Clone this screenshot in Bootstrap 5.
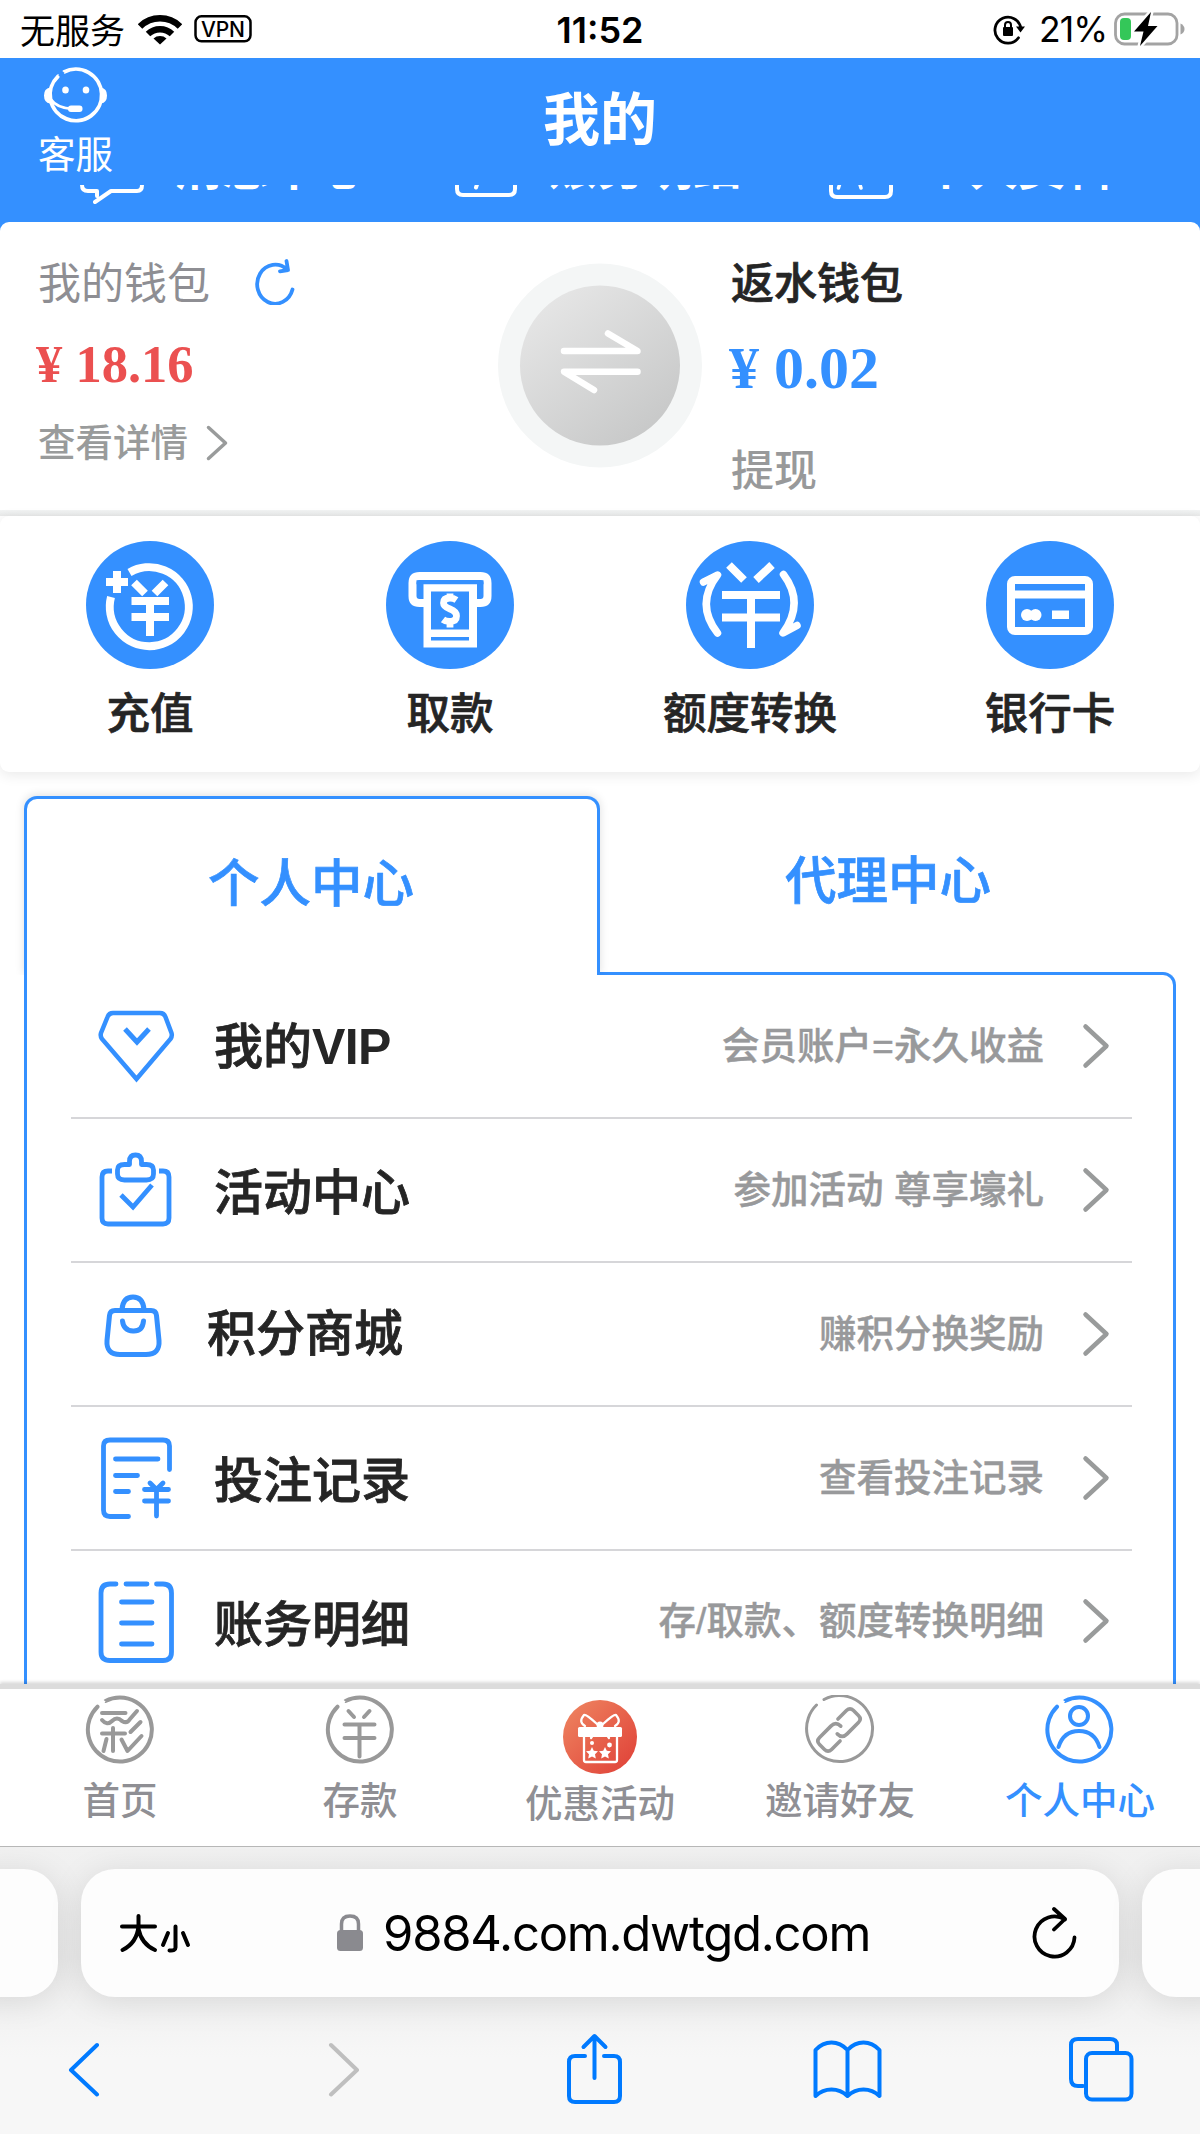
<!DOCTYPE html>
<html lang="zh-CN">
<head>
<meta charset="utf-8">
<meta name="viewport" content="width=device-width, initial-scale=1">
<title>我的</title>
<link href="https://cdn.jsdelivr.net/npm/bootstrap@5.3.0/dist/css/bootstrap.min.css" rel="stylesheet">
<style>
:root{--brand:#3490ff;--ink:#252525;--soft:#98999b;--tabgray:#8f8f94;--ios:#007aff}
body{font-family:"Noto Sans CJK SC",sans-serif;background:#fff;color:var(--ink);width:1200px;height:2134px;overflow:hidden}
svg{display:block;flex:none;fill:none;stroke-linecap:round;stroke-linejoin:round}
.status-bar{height:58px;padding:0 15px 0 20px;color:#000;font-size:35px;line-height:56px}
.sysfont{font-family:Inter,sans-serif}
.clock{font-size:36px;padding-right:5px;padding-top:2px}
.percent{margin:0 6px 0 14px;font-size:35.5px;letter-spacing:-1px;padding-top:2px}
.side{width:400px}
.app-head{height:127px;background:var(--brand);color:#fff}
.service{width:151px;padding-top:9px}
.service span{font-size:37.5px;line-height:40px;margin-top:8px}
.head-title{font-size:57px;line-height:114px}
.peek{height:37px;background:var(--brand);color:#fff;overflow:hidden;font-size:48px;line-height:48px;font-weight:700}
.peek span{margin-bottom:34px;white-space:nowrap}
.peek-a{margin-left:80px;width:375px;gap:29px}
.peek-b{width:374px;gap:31px}
.peek-c{gap:28px}
.under-blue{background:linear-gradient(var(--brand) 0 40px,#f0f2f2 40px)}
.wallet{height:288px;background:#fff;border-radius:9px 9px 0 0}
.wallet-left{width:497px;padding:35px 0 0 38px}
.wallet-right{padding:35px 0 0 29px}
.w-name{font-size:43px;line-height:46px;font-weight:500}
.semi{-webkit-text-stroke:.7px currentColor}
.w-sum{font-family:"Liberation Serif",serif;font-weight:700}
.w-main{font-size:52.5px;line-height:60px;margin-top:31px;margin-left:-2px;color:#eb5050}
.w-back{font-size:60px;line-height:66px;margin-top:32px;margin-left:-2px;color:var(--brand)}
.w-more{margin-top:24px;color:#999b9b;font-size:37.5px;line-height:44px;font-weight:500}
.w-out{margin-top:43px;color:#98999a}
.actions-gap{height:6px;background:linear-gradient(#f2f4f4,#e8e9e9)}
.quick{height:256px;border-radius:9px;background:#fff;box-shadow:0 3px 14px rgba(0,0,0,.09);padding-top:1px}
.quick span{font-size:43.5px;line-height:50px;margin-top:17px;font-weight:500}
.tabs-row{height:179px;padding:0 24px;margin-top:24px;margin-bottom:-3px;font-size:51.5px}
.tab-on{width:576px;height:179px;border:3px solid var(--brand);border-bottom:0;border-radius:13px 13px 0 0;background:#fff;color:var(--brand);font-weight:500;z-index:2;padding-bottom:14px;padding-right:2px;box-shadow:0 -1px 10px rgba(0,0,0,.13);clip-path:inset(-12px -12px 0 -12px)}
.tab-off{color:var(--brand);font-weight:500;width:576px;padding-bottom:18px}
.panel{margin:0 24px;height:712px;border:3px solid var(--brand);border-bottom:0;border-top-right-radius:13px;padding:0 41px 0 44px;overflow:hidden}
.line-item{height:144px;border-bottom:2px solid #d6d6d9;padding:0 22px 0 26px}
.line-item:last-child{border-bottom:0}
.pic{width:80px}
.l-name{font-size:49px;line-height:60px;font-weight:500;margin-left:37px;padding-bottom:3px;-webkit-text-stroke:.8px currentColor}
.l-name b{font-family:"Liberation Sans",sans-serif;font-size:50px;letter-spacing:-.6px;-webkit-text-stroke:0}
.l-note{font-family:"Liberation Sans","Noto Sans CJK SC",sans-serif;font-size:37.5px;font-weight:500;color:var(--soft);-webkit-text-stroke:.4px currentColor}
.chev{margin-left:38px}
.dock{height:162px;background:#fff;position:relative;z-index:3;border-top:5px solid #dcdcdc;box-shadow:0 -2px 3px rgba(0,0,0,.15);color:var(--tabgray);font-size:37.5px;font-weight:500;line-height:44px}
.dock > div{width:240px;padding-top:6px}
.dock > .dock-gift{padding-top:11px}
.dock span{margin-top:11px}
.dock .dock-gift span{margin-top:5px}
.safari{height:289px;border-top:1px solid #b9b9b9;background:linear-gradient(#f1f1f1,#ececec 110px,#f7f7f7 210px);overflow:hidden;color:#000}
.urls{padding-top:22px;gap:23px;margin-left:-42px;width:1284px}
.pill{height:128px;background:#fdfdfd;border-radius:34px;box-shadow:0 4px 34px rgba(0,0,0,.1)}
.pill-side{width:100px;flex:none}
.pill-main{width:1038px;flex:none;padding:0 41px 0 38px}
.address{font-size:49px;letter-spacing:-1.25px;margin-left:19px;padding-top:2px}
.tools{padding:34px 0 0 68px;height:110px}
</style>
<script src="https://cdn.jsdelivr.net/npm/bootstrap@5.3.0/dist/js/bootstrap.bundle.min.js"></script>
</head>
<body>
<div class="status-bar d-flex align-items-center justify-content-between">
  <div class="side d-flex align-items-center">
    <span>无服务</span>
    <svg style="margin-left:13px" width="44" height="34" viewBox="138 12 44 34"><g stroke="#000" stroke-width="6.500" stroke-linecap="butt"><path d="M140 26.500a28.500 28.500 0 0 1 40 0"/><path d="M148 34a17.500 17.500 0 0 1 24 0"/></g><path d="M153.500 38.500a10 10 0 0 1 13 0L160 44.500z" fill="#000"/></svg>
    <svg style="margin-left:12px" width="58" height="28" viewBox="194 15 58 28"><rect x="195.500" y="16.300" width="55" height="25" rx="6" stroke="#000" stroke-width="2.500"/><text x="223" y="36.500" text-anchor="middle" font-family="Inter" font-size="21" font-weight="500" fill="#000" textLength="44">VPN</text></svg>
  </div>
  <div class="sysfont clock fw-semibold">11:52</div>
  <div class="side d-flex align-items-center justify-content-end">
    <svg width="32" height="32" viewBox="993 15 32 32"><path d="M1018.500 39.800A13 13 0 1 1 1020.800 30" stroke="#000" stroke-width="2.800"/><path d="M1016 28.500h9l-4.500 6z" fill="#000"/><rect x="1003" y="29" width="10" height="9" rx="1" fill="#000"/><path d="M1005 29v-2a3 3 0 0 1 6 0v2" stroke="#000" stroke-width="2"/></svg>
    <span class="sysfont percent">21%</span>
    <svg width="72" height="36" viewBox="1113 11 72 36"><rect x="1115.500" y="14" width="61.500" height="30" rx="9" stroke="#a3a3a3" stroke-width="2.800"/><rect x="1120" y="18" width="11" height="22" rx="4" fill="#34c759"/><path d="M1180.500 23.500q4 2 4 5.500t-4 5.500z" fill="#a3a3a3"/><path d="M1151 12l-17 19.500h9.500l-3.500 14.500 17.500-20h-9.500z" fill="#000" stroke="#fff" stroke-width="5" paint-order="stroke"/></svg>
  </div>
</div>

<header class="app-head d-flex">
  <div class="service d-flex flex-column align-items-center">
    <svg width="66" height="57" viewBox="43 66.500 66 57"><g stroke="#fff" stroke-width="3.800"><path d="M64 71.500a25.800 25.800 0 1 1-6 4.300M58 75.800"/></g><path d="M63.500 71.500l-4 4.500" stroke="var(--brand)" stroke-width="3" stroke-linecap="butt"/><path d="M50 87q-6 1-6 8t6 8zM101 87q6 1 6 8t-6 8z" fill="#fff"/><path d="M50 98q7 10 23 10.500" stroke="#fff" stroke-width="3"/><rect x="68" y="105" width="14.500" height="6.500" rx="3" fill="#fff"/><ellipse cx="65.500" cy="89.500" rx="3.300" ry="3.500" fill="#fff"/><ellipse cx="86" cy="89.500" rx="3.300" ry="3.500" fill="#fff"/></svg>
    <span>客服</span>
  </div>
  <div class="head-title fw-bold text-center flex-grow-1">我的</div>
  <div class="service"></div>
</header>
<div class="peek d-flex align-items-end">
  <div class="peek-a d-flex align-items-end"><svg width="65" height="37" viewBox="80 185 65 37"><path d="M82 180v5q0 6 6 6h9v5M95 202l16-11h26q5 0 5-6v-5" stroke="#fff" stroke-width="4"/></svg><span>消息中心</span></div>
  <div class="peek-b d-flex align-items-end"><svg width="63" height="37" viewBox="455 185 63 37"><path d="M457 180v9q0 6 6 6h46q6 0 6-6v-9" stroke="#fff" stroke-width="4"/><path d="M477.500 183l-1.500 4.500" stroke="#fff" stroke-width="4"/></svg><span>账务明细</span></div>
  <div class="peek-c d-flex align-items-end"><svg width="65" height="37" viewBox="829 185 65 37"><path d="M831 180v11q0 6 6 6h48q6 0 6-6v-11" stroke="#fff" stroke-width="4"/><path d="M840 183l-1.500 5M859.500 183l1.500 5" stroke="#fff" stroke-width="3.500"/></svg><span>个人资料</span></div>
</div>

<div class="under-blue"><section class="wallet d-flex">
  <div class="wallet-left">
    <div class="d-flex align-items-center" style="height:46px;color:#8e8e93"><span class="w-name fw-normal">我的钱包</span>
      <svg style="margin-left:44px;margin-top:2px" width="44" height="48" viewBox="254 259 44 48"><path d="M292.500 291.500A18 19.500 0 1 1 287 271.500M286.500 263l1.500 9-8 1.300" stroke="var(--brand)" stroke-width="3.800"/></svg></div>
    <div class="w-sum w-main">¥ 18.16</div>
    <div class="w-more d-flex align-items-center"><span>查看详情</span>
      <svg style="margin-left:17px;margin-top:6px" width="24" height="38" viewBox="205 426 24 38"><path d="M208.500 429.500l17 15.500-17 15.500" stroke="#999b9b" stroke-width="3.500"/></svg></div>
  </div>
  <svg style="margin-top:41px" width="205" height="205" viewBox="497 263.500 205 205"><defs><linearGradient id="disc" x1="0" y1="0" x2=".8" y2="1"><stop stop-color="#eaeaea"/><stop offset="1" stop-color="#c6c7c7"/></linearGradient></defs><circle cx="600" cy="366" r="102" fill="#f4f6f6"/><circle cx="600" cy="366" r="80" fill="url(#disc)"/><path d="M564 351.500h73.500L608 334M637.500 372.300H564L594 390.500" stroke="#fff" stroke-width="6.500"/></svg>
  <div class="wallet-right">
    <div class="w-name semi">返水钱包</div>
    <div class="w-sum w-back">¥ 0.02</div>
    <div class="w-name w-out">提现</div>
  </div>
</section></div>
<div class="actions-gap"></div>
<section class="quick d-flex text-center">
  <div class="col-3 d-flex flex-column align-items-center pt-4"><svg width="128" height="128" viewBox="0 0 128 128"><circle cx="64" cy="64" r="64" fill="var(--brand)"/><g stroke="#fff" stroke-width="8" stroke-linecap="butt" stroke-linejoin="miter"><path d="M43.500 31.500A39.500 39.500 0 1 1 25 56M31 30v22M20 41h22"/><path d="M48 41.500L59 52.500M79.500 41.500L68.500 52.500M45.500 60h37.500M45.500 76h37.500M64 60v35"/></g></svg><span class="semi">充值</span></div>
  <div class="col-3 d-flex flex-column align-items-center pt-4"><svg width="128" height="128" viewBox="0 0 128 128"><circle cx="64" cy="64" r="64" fill="var(--brand)"/><g stroke="#fff" stroke-width="8" stroke-linecap="butt"><path d="M38 62h-4.500q-7 0-7-7V42q0-7 7-7h61q7 0 7 7v13q0 7-7 7H90"/></g><path d="M37.500 43h53.500v63.500h-53.500z" fill="#fff"/><path d="M45 50.500h38v38H45zM45 96h38v3.500H45z" fill="var(--brand)"/><path d="M30.500 39.200h67v4h-67z" fill="var(--brand)"/><path d="M70.500 59q-3-2-6.500-2-6.500 0-6.500 5 0 3.500 6.500 6t6.500 7q0 5.500-7 5.500-4 0-6.500-2M64 52.500v4M64 81v5.500" stroke="#fff" stroke-width="6.800" stroke-linecap="butt"/></svg><span class="semi">取款</span></div>
  <div class="col-3 d-flex flex-column align-items-center pt-4"><svg width="128" height="128" viewBox="0 0 128 128"><circle cx="64" cy="64" r="64" fill="var(--brand)"/><g stroke="#fff" stroke-width="8" stroke-linecap="butt" stroke-linejoin="miter"><path d="M43 24L58 39M86 24L70 39M36 54h58M36 76.500h58M65 54v53"/></g><g stroke="#fff" stroke-width="7.500"><path d="M31.500 92Q9 63 31.500 34L17.500 41"/><path d="M97.500 33.500Q119 62 97 92L111 84.500"/></g></svg><span class="semi">额度转换</span></div>
  <div class="col-3 d-flex flex-column align-items-center pt-4"><svg width="128" height="128" viewBox="0 0 128 128"><circle cx="64" cy="64" r="64" fill="var(--brand)"/><rect x="25" y="39" width="78" height="51" rx="4" stroke="#fff" stroke-width="8"/><path d="M25 53.500h78" stroke="#fff" stroke-width="8"/><circle cx="41" cy="74" r="6" fill="#fff"/><circle cx="49.500" cy="74" r="6" fill="#fff"/><rect x="66" y="69.500" width="17" height="8.500" fill="#fff"/></svg><span class="semi">银行卡</span></div>
</section>

<div class="tabs-row d-flex">
  <div class="tab-on semi d-flex align-items-center justify-content-center">个人中心</div>
  <div class="tab-off semi d-flex align-items-center justify-content-center">代理中心</div>
</div>
<main class="panel">
  <div class="line-item d-flex align-items-center">
    <div class="pic"><svg width="80" height="84" viewBox="97 1005 80 84"><path d="M113 1014h47q4 0 5.500 4l6 16q1 3-1 6L136.500 1080 102 1040q-2-3-1-6l6.500-16q1.500-4 5.500-4z" stroke="var(--brand)" stroke-width="4.500" stroke-linejoin="miter"/><path d="M125 1030l12 13 12-13" stroke="var(--brand)" stroke-width="5" stroke-linecap="butt" stroke-linejoin="miter"/></svg></div>
    <span class="l-name">我的<b>VIP</b></span><span class="l-note ms-auto">会员账户=永久收益</span>
    <svg class="chev" width="28" height="46" viewBox="1082 1023 28 46"><path d="M1085.500 1026.500l21 19.500-21 19.500" stroke="#999b9b" stroke-width="4.500"/></svg>
  </div>
  <div class="line-item d-flex align-items-center">
    <div class="pic"><svg width="80" height="84" viewBox="97 1148 80 84"><g stroke="var(--brand)" stroke-width="4.800" stroke-linecap="butt"><path d="M112 1171h-4q-6 0-6 6v41q0 6 6 6h55q6 0 6-6v-41q0-6-6-6h-4"/><path d="M129.500 1164.500v-3q0-6.500 6-6.500t6 6.500v3h5q7 0 7 5.500v4q0 6-7 6h-22q-7 0-7-6v-4q0-5.500 7-5.500z"/><path d="M121 1195l12 12 19-22" stroke-linejoin="miter"/></g></svg></div>
    <span class="l-name">活动中心</span><span class="l-note ms-auto">参加活动 尊享壕礼</span>
    <svg class="chev" width="28" height="46" viewBox="1082 1023 28 46"><path d="M1085.500 1026.500l21 19.500-21 19.500" stroke="#999b9b" stroke-width="4.500"/></svg>
  </div>
  <div class="line-item d-flex align-items-center">
    <div class="pic"><svg width="80" height="84" viewBox="97 1291.500 80 84"><g stroke="var(--brand)" stroke-width="5"><path d="M115 1310h36q5 0 5.500 5l2.500 25q1 14-13 14h-26q-14 0-13-14l2.500-25q.500-5 5.500-5z"/><path d="M122 1309q1-12.500 11-12.500t11 12.500M122.500 1320.500q1 9.500 10.500 10t10.500-10"/></g></svg></div>
    <span class="l-name" style="margin-left:30px;padding-bottom:8px">积分商城</span><span class="l-note ms-auto">赚积分换奖励</span>
    <svg class="chev" width="28" height="46" viewBox="1082 1023 28 46"><path d="M1085.500 1026.500l21 19.500-21 19.500" stroke="#999b9b" stroke-width="4.500"/></svg>
  </div>
  <div class="line-item d-flex align-items-center">
    <div class="pic"><svg width="80" height="84" viewBox="97 1436 80 84"><g stroke="var(--brand)" stroke-width="4.800"><path d="M128.500 1516.500H110q-6.500 0-6.500-6.500v-64q0-6 6.500-6h53q6.500 0 6.500 6v23.500M115.500 1459h42.500M115.500 1475.500h22M115.500 1491.500h13M144.500 1489.500h24M144.500 1501h24M156.500 1489v27M150 1483l6.500 6.500 6.500-6.500"/></g></svg></div>
    <span class="l-name">投注记录</span><span class="l-note ms-auto">查看投注记录</span>
    <svg class="chev" width="28" height="46" viewBox="1082 1023 28 46"><path d="M1085.500 1026.500l21 19.500-21 19.500" stroke="#999b9b" stroke-width="4.500"/></svg>
  </div>
  <div class="line-item d-flex align-items-center">
    <div class="pic"><svg width="80" height="84" viewBox="97 1581 80 84"><g stroke="var(--brand)" stroke-width="4.800"><path d="M116 1584h-6q-9 0-9 9v59q0 8.500 9 8.500h53q8.500 0 8.500-8.500v-59q0-9-8.500-9h-6.500M126 1584h21M121.500 1602h30.500M121.500 1623h30.500M121.500 1644h30.500"/></g></svg></div>
    <span class="l-name" style="padding-bottom:5px">账务明细</span><span class="l-note ms-auto pb-1">存/取款、额度转换明细</span>
    <svg class="chev mb-1" width="28" height="46" viewBox="1082 1023 28 46"><path d="M1085.500 1026.500l21 19.500-21 19.500" stroke="#999b9b" stroke-width="4.500"/></svg>
  </div>
</main>

<nav class="dock d-flex">
  <div class="d-flex flex-column align-items-center"><svg width="70" height="70" viewBox="85.500 1694 70 70"><g stroke="#999" stroke-width="4"><path d="M106 1700a32 32 0 1 1-8 5.700"/><path d="M102.500 1712h23.500M102.500 1719q5 6 10 1t10 0q5 3 8-2l7-8M102.500 1732.500h23M113.500 1727v23M107 1738l-3 12M141 1721l-10 10M142 1735l-14 15-6-11.500"/></g><path d="M104 1699l-3.500 5" stroke="#fff" stroke-width="5" stroke-linecap="butt"/></svg><span>首页</span></div>
  <div class="d-flex flex-column align-items-center"><svg width="70" height="70" viewBox="85.500 1694 70 70"><g stroke="#999" stroke-width="4"><path d="M106 1700a32 32 0 1 1-8 5.700"/><path d="M109 1710l5.500 6M130 1710l-5.500 6M105 1723.500h30M105 1737h30M120 1724v31.500"/></g><path d="M104 1699l-3.500 5" stroke="#fff" stroke-width="5" stroke-linecap="butt"/></svg><span>存款</span></div>
  <div class="dock-gift d-flex flex-column align-items-center"><svg width="74" height="74" viewBox="563 1699 74 74"><defs><linearGradient id="gift" x1="0" y1="0" x2="1" y2="1"><stop stop-color="#ef8762"/><stop offset="1" stop-color="#df3e36"/></linearGradient></defs><circle cx="600" cy="1736" r="37" fill="url(#gift)"/><rect x="578" y="1726" width="44" height="10" rx="1.500" fill="#fff"/><path d="M584 1736v23q0 2 2 2h29q2 0 2-2v-23M585 1725q-7-4-1-11 2-1 13 9M615 1725q7-4 1-11-2-1-13 9M600 1724l-9 13M600 1724l9 13" stroke="#fff" stroke-width="2.300"/><circle cx="600" cy="1724" r="3.500" fill="#fff"/><path d="M592 1746l1.800 3.800 4.200.5-3 2.900.8 4.200-3.800-2-3.800 2 .8-4.200-3-2.900 4.200-.5zM605 1746l1.800 3.800 4.200.5-3 2.900.8 4.200-3.800-2-3.800 2 .8-4.200-3-2.900 4.200-.5z" fill="#fff"/><circle cx="592" cy="1742" r="2" fill="#fff"/><circle cx="609.500" cy="1744" r="2.400" fill="#fff"/></svg><span>优惠活动</span></div>
  <div class="d-flex flex-column align-items-center"><svg width="70" height="70" viewBox="86 1694 70 70"><g stroke="#999" stroke-width="3"><path d="M105 1698.500a33 33 0 1 1-7.500 5.500"/><g transform="rotate(-45 120 1729)" stroke-width="3.600"><path d="M117 1720.500h-16q-5 0-5 5v7q0 5 5 5h12M117 1720.500q7 0 7 7"/><path d="M123 1737.500h16q5 0 5-5v-7q0-5-5-5h-12M123 1737.500q-7 0-7-7"/></g></g></svg><span>邀请好友</span></div>
  <div class="d-flex flex-column align-items-center" style="color:var(--brand)"><svg width="70" height="70" viewBox="86 1694 70 70"><g stroke="var(--brand)" stroke-width="4"><path d="M106 1700a32 32 0 1 1-8 5.700"/><circle cx="120" cy="1715" r="9"/><path d="M99.500 1746q5-16 20.500-16t20.500 16"/></g><path d="M104 1699l-3.500 5" stroke="#fff" stroke-width="5" stroke-linecap="butt"/></svg><span>个人中心</span></div>
</nav>

<footer class="safari">
  <div class="urls d-flex">
    <div class="pill pill-side"></div>
    <div class="pill pill-main d-flex align-items-center">
      <svg width="72" height="42" viewBox="119 1913 72 42" stroke="#000" stroke-width="4"><path d="M122 1927.500h33M138.500 1917v10Q137 1944 122.500 1951M138.500 1930q3 15 16.500 21"/><path d="M175.500 1927.500v21q0 3.500-6 3M168 1934l-5 12M183 1934l5 12"/></svg>
      <svg style="margin-left:145px" width="28" height="40" viewBox="336 1914 28 40"><rect x="337" y="1931" width="26" height="21" rx="3.500" fill="#8a8a8f"/><path d="M341.500 1932v-7q0-8 8.500-8t8.500 8v7" stroke="#8a8a8f" stroke-width="3.500"/></svg>
      <span class="address sysfont">9884.com.dwtgd.com</span>
      <svg class="ms-auto" width="46" height="56" viewBox="1032 1904 46 56"><path d="M1074.500 1936.500A20 20 0 1 1 1065 1918.500M1054 1908l11 10-11 10.500" stroke="#000" stroke-width="3.800"/></svg>
    </div>
    <div class="pill pill-side"></div>
  </div>
  <div class="tools d-flex align-items-center">
    <svg width="32" height="56" viewBox="68 2041 32 56"><path d="M97 2045l-26 25 26 24.500" stroke="var(--ios)" stroke-width="4"/></svg>
    <svg style="margin-left:228px" width="32" height="56" viewBox="328 2041 32 56"><path d="M331 2045l26 25-26 24.500" stroke="#bfbfbf" stroke-width="4"/></svg>
    <svg style="margin-left:206px" width="58" height="74" viewBox="566 2031 58 74"><path d="M585 2055h-10q-6 0-6 6v34q0 6 6 6h39q6 0 6-6v-34q0-6-6-6h-10M594.500 2077v-42M583.500 2046l11-11 11 11" stroke="var(--ios)" stroke-width="4"/></svg>
    <svg style="margin-left:188px" width="70" height="60" viewBox="812 2040 70 60"><path d="M847.500 2051q-7-7.500-16-7.500t-16 7.500v46q7-6.500 16-6.500t16 6.500q7-6.500 16-6.500t16 6.500v-46q-7-7.500-16-7.500t-16 7.500zV2096" stroke="var(--ios)" stroke-width="4"/></svg>
    <svg style="margin-left:186px" width="66" height="66" viewBox="1068 2037 66 66"><path d="M1083 2087h-5q-7 0-7-7v-34q0-6 7-6h32q7 0 7 6v7" stroke="var(--ios)" stroke-width="4"/><rect x="1086" y="2054" width="45.500" height="46.500" rx="6" stroke="var(--ios)" stroke-width="4"/></svg>
  </div>
</footer>
</body>
</html>
